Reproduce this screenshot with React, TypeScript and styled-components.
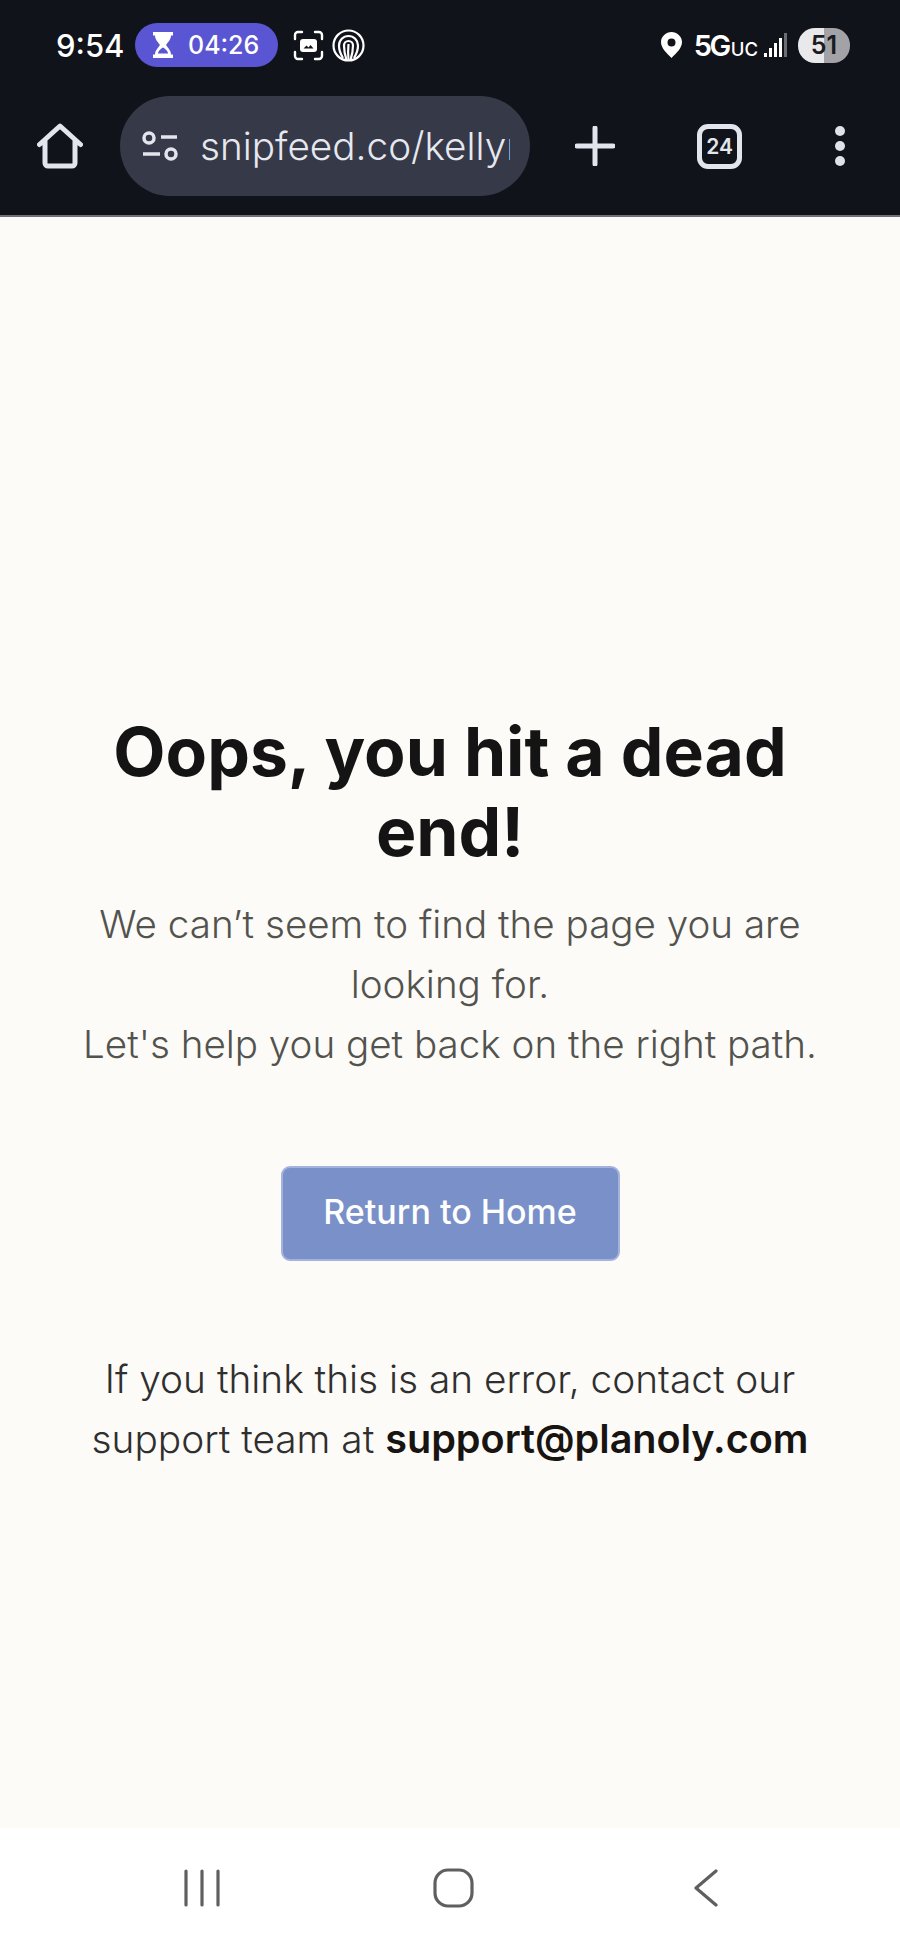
import styled, { createGlobalStyle } from "styled-components";

const GlobalStyle = createGlobalStyle`
  html, body {
    margin: 0;
    padding: 0;
    background: #ffffff;
  }
  * {
    box-sizing: border-box;
  }
`;

const Screen = styled.div`
  width: 900px;
  height: 1950px;
  display: flex;
  flex-direction: column;
  font-family: Inter, "Liberation Sans", sans-serif;
  overflow: hidden;
`;

const Header = styled.header`
  height: 217px;
  flex-shrink: 0;
  background: #10131a;
  border-bottom: 2px solid #6f7078;
  display: flex;
  flex-direction: column;
`;

const StatusBar = styled.div`
  height: 96px;
  padding: 23px 50px 0 56px;
  display: flex;
  align-items: flex-start;
  justify-content: space-between;
`;

const StatusGroup = styled.div`
  display: flex;
  align-items: center;
  height: 44px;
`;

const Clock = styled.span`
  font-size: 31px;
  font-weight: 500;
  color: #ffffff;
  width: 79px;
`;

const TimerPill = styled.div`
  width: 143px;
  height: 44px;
  border-radius: 22px;
  background: #5a55d2;
  color: #ffffff;
  display: flex;
  align-items: center;
  gap: 15px;
  padding-left: 18px;
  font-size: 25px;
  font-weight: 500;
  margin-right: 15px;
`;

const Network = styled.span`
  font-size: 29px;
  font-weight: 600;
  color: #ffffff;
  margin-left: 12px;
  letter-spacing: -2.500px;
`;

const NetworkSub = styled.span`
  font-size: 18.500px;
  font-weight: 500;
  letter-spacing: 0;
  margin-left: 2px;
`;

const Battery = styled.div`
  width: 52px;
  height: 35px;
  border-radius: 17px;
  margin-left: 10px;
  background: linear-gradient(90deg, #e9e9ec 50%, #a3a3a7 50%);
  color: #1a1c22;
  font-size: 25px;
  font-weight: 600;
  display: flex;
  align-items: center;
  justify-content: center;
`;

const Toolbar = styled.div`
  display: flex;
  align-items: center;
  height: 100px;
  padding-left: 37px;
`;

const UrlPill = styled.div`
  width: 410px;
  height: 100px;
  margin-left: 37px;
  border-radius: 50px;
  background: #363947;
  display: flex;
  align-items: center;
  padding-left: 21px;
  gap: 21px;
  flex-shrink: 0;
`;

const UrlText = styled.span`
  width: 310px;
  overflow: hidden;
  white-space: nowrap;
  font-size: 38.700px;
  font-weight: 300;
  color: #e6e8ef;
`;

const ToolButton = styled.div<{ $left: number }>`
  margin-left: ${(p) => p.$left}px;
  display: flex;
  flex-shrink: 0;
`;

const TabCount = styled.div`
  width: 45px;
  height: 45px;
  border: 5px solid #e2e5ed;
  border-radius: 11px;
  color: #e2e5ed;
  font-size: 21px;
  font-weight: 600;
  display: flex;
  align-items: center;
  justify-content: center;
`;

const Main = styled.main`
  flex: 1;
  background: #fdfbf8;
  display: flex;
  flex-direction: column;
  align-items: center;
  padding-top: 494px;
  text-align: center;
`;

const Title = styled.h1`
  margin: 0 0 23px;
  width: 720px;
  font-size: 67.800px;
  line-height: 80px;
  font-weight: 700;
  color: #141414;
`;

const Lead = styled.p`
  margin: 0;
  width: 780px;
  font-size: 38.600px;
  line-height: 60px;
  font-weight: 300;
  color: #53534e;
`;

const HomeButton = styled.button`
  margin-top: 92px;
  width: 339px;
  height: 95px;
  padding: 0 0 5px;
  border: 2px solid #a3b3dc;
  border-radius: 9px;
  background: #7a90c8;
  color: #ffffff;
  font-family: inherit;
  font-size: 34px;
  font-weight: 500;
`;

const Support = styled.p`
  margin: 88px 0 0;
  width: 780px;
  font-size: 38.800px;
  line-height: 60px;
  font-weight: 300;
  color: #2f2f2f;
`;

const Email = styled.strong`
  font-size: 39.600px;
  font-weight: 600;
  color: #171412;
`;

const NavBar = styled.nav`
  height: 122px;
  flex-shrink: 0;
  background: #ffffff;
  display: flex;
  align-items: center;
  padding: 40px 0 42px 184px;
`;

const NavIcon = styled.svg<{ $left: number }>`
  margin-left: ${(p) => p.$left}px;
  display: block;
  flex-shrink: 0;
`;

function HourglassIcon() {
  return (
    <svg width="20" height="26" viewBox="0 0 20 26">
      <path d="M0 0h20v3.500h-2c0 4-3 6.500-5 9.500 2 3 5 5.500 5 9.500h2V26H0v-3.500h2c0-4 3-6.500 5-9.500-2-3-5-5.500-5-9.500H0z" fill="#fff" />
      <path d="M5 21.500c0-2.500 3-5 5-6 2 1 5 3.500 5 6z" fill="#5a55d2" />
    </svg>
  );
}

function CaptureIcon() {
  return (
    <svg width="31" height="31" viewBox="0 0 31 31" fill="none" style={{ marginRight: 8 }}>
      <path d="M2 9V5a3 3 0 0 1 3-3h4M22 2h4a3 3 0 0 1 3 3v4M29 22v4a3 3 0 0 1-3 3h-4M9 29H5a3 3 0 0 1-3-3v-4" stroke="#fff" strokeWidth="2.400" strokeLinecap="round" />
      <path d="M10 9h11a3 3 0 0 1 3 3v7a3 3 0 0 1-3 3H10a3 3 0 0 1-3-3v-7a3 3 0 0 1 3-3z" fill="#fff" />
      <path d="M10.500 18.500l3-3 2 2 2-2.500 3 3.500z" fill="#10131a" />
    </svg>
  );
}

function FingerprintIcon() {
  return (
    <svg width="33" height="33" viewBox="0 0 33 33" fill="none" stroke="#fff" strokeWidth="2.200">
      <circle cx="16.500" cy="16.500" r="15" />
      <path d="M11 29c-2.500-4-4-8-4-12.500a9.500 9.500 0 0 1 19 0c0 4.500-1.500 8.500-4 12.500" />
      <path d="M14.500 31c-1.500-4.500-2.500-9-2.500-14.500a4.500 4.500 0 0 1 9 0c0 5.500-1 10-2.500 14.500" />
      <path d="M16.500 15c-.5 5-.5 10.500 0 16" />
    </svg>
  );
}

function PinIcon() {
  return (
    <svg width="21" height="26" viewBox="0 0 21 26">
      <path fillRule="evenodd" d="M10.500 0C16 0 21 4.500 21 10c0 6-5.500 11-10.500 16C5.500 21 0 16 0 10 0 4.500 5 0 10.500 0zm0 6.500a4 4 0 1 0 0 8 4 4 0 0 0 0-8z" fill="#fff" />
    </svg>
  );
}

function SignalIcon() {
  return (
    <svg width="24" height="26" viewBox="0 0 24 26" style={{ marginLeft: 6 }}>
      <rect x="0" y="21" width="3" height="4" fill="#fff" />
      <rect x="5" y="16" width="3" height="9" fill="#fff" />
      <rect x="10" y="11" width="3" height="14" fill="#fff" />
      <rect x="15" y="6" width="3" height="19" fill="#fff" />
      <rect x="20" y="1" width="3" height="24" fill="#6b6d72" />
    </svg>
  );
}

function HomeIcon() {
  return (
    <svg width="46" height="46" viewBox="0 0 46 46" fill="none">
      <path d="M2.500 21.500L23 3l20.500 18.500M8 18v22a3 3 0 0 0 3 3h24a3 3 0 0 0 3-3V18" stroke="#e2e5ed" strokeWidth="5" strokeLinecap="round" strokeLinejoin="round" />
    </svg>
  );
}

function TuneIcon() {
  return (
    <svg width="38" height="30" viewBox="0 0 38 30" fill="none" stroke="#e2e5ed" strokeWidth="3.500" style={{ flexShrink: 0 }}>
      <circle cx="8" cy="7" r="5" />
      <path d="M20 6h16M2 23h17" />
      <circle cx="30" cy="23" r="5" />
    </svg>
  );
}

function PlusIcon() {
  return (
    <svg width="40" height="40" viewBox="0 0 40 40">
      <path d="M20 2v36M2 20h36" stroke="#e2e5ed" strokeWidth="5" strokeLinecap="round" />
    </svg>
  );
}

function MenuIcon() {
  return (
    <svg width="12" height="42" viewBox="0 0 12 42" fill="#dfe2ea">
      <circle cx="6" cy="6" r="5" />
      <circle cx="6" cy="21" r="5" />
      <circle cx="6" cy="36" r="5" />
    </svg>
  );
}

export default function App() {
  return (
    <Screen>
      <GlobalStyle />
      <Header>
        <StatusBar>
          <StatusGroup>
            <Clock>9:54</Clock>
            <TimerPill>
              <HourglassIcon />
              04:26
            </TimerPill>
            <CaptureIcon />
            <FingerprintIcon />
          </StatusGroup>
          <StatusGroup>
            <PinIcon />
            <Network>
              5G<NetworkSub>UC</NetworkSub>
            </Network>
            <SignalIcon />
            <Battery>51</Battery>
          </StatusGroup>
        </StatusBar>
        <Toolbar>
          <HomeIcon />
          <UrlPill>
            <TuneIcon />
            <UrlText>snipfeed.co/kellyr</UrlText>
          </UrlPill>
          <ToolButton $left={45}>
            <PlusIcon />
          </ToolButton>
          <ToolButton $left={82}>
            <TabCount>24</TabCount>
          </ToolButton>
          <ToolButton $left={92}>
            <MenuIcon />
          </ToolButton>
        </Toolbar>
      </Header>
      <Main>
        <Title>Oops, you hit a dead end!</Title>
        <Lead>
          We can’t seem to find the page you are looking for.
          <br />
          Let's help you get back on the right path.
        </Lead>
        <HomeButton>Return to Home</HomeButton>
        <Support>
          If you think this is an error, contact our
          <br />
          support team at <Email>support@planoly.com</Email>
        </Support>
      </Main>
      <NavBar>
        <NavIcon $left={0} width="36" height="38" viewBox="0 0 36 38" fill="none" stroke="#5f5f61" strokeWidth="3.200" strokeLinecap="round">
          <path d="M2 2v34M18 2v34M34 2v34" />
        </NavIcon>
        <NavIcon $left={213} width="41" height="40" viewBox="0 0 41 40" fill="none" stroke="#5f5f61" strokeWidth="3.200">
          <rect x="2" y="2" width="37" height="36" rx="13" />
        </NavIcon>
        <NavIcon $left={219} width="25" height="38" viewBox="0 0 25 38" fill="none" stroke="#5f5f61" strokeWidth="3.200" strokeLinecap="round" strokeLinejoin="round">
          <path d="M23 2L3 19l20 17" />
        </NavIcon>
      </NavBar>
    </Screen>
  );
}
